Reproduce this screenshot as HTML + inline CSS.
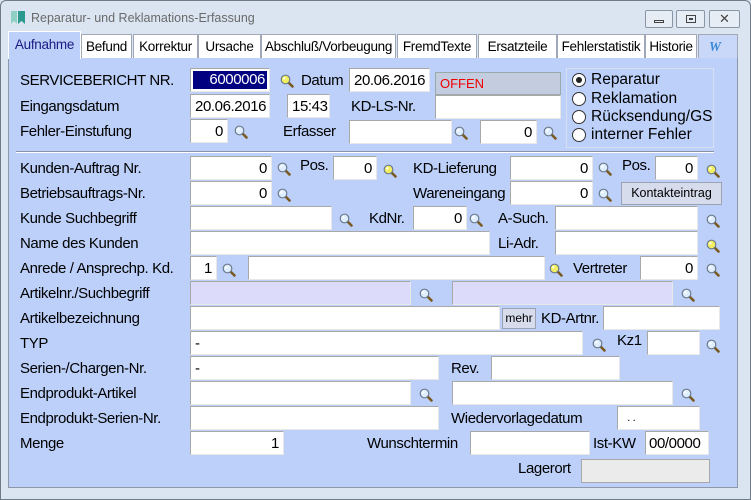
<!DOCTYPE html>
<html><head><meta charset="utf-8"><style>
*{margin:0;padding:0;box-sizing:border-box}
body{width:751px;height:500px;overflow:hidden;background:#dbe5f1;font-family:"Liberation Sans",Arial,sans-serif;position:relative}
.a{position:absolute}
.l{position:absolute;font-size:15px;color:#000;letter-spacing:-0.4px;white-space:nowrap;line-height:25px;height:24px}
.f{position:absolute;background:#fff;border:1px solid #a8a8a8;border-right-color:#e8e8e8;border-bottom-color:#e8e8e8;font-size:15px;line-height:23px;letter-spacing:-0.4px;padding:0 4px;height:24px;white-space:nowrap}
.r{text-align:right}
.lt{background:#dcdcfa}
.m{position:absolute;width:14px;height:14px}
.tab{position:absolute;top:34px;height:24px;background:#fff;border:1px solid #a0a8b8;border-bottom:none;font-size:13.5px;line-height:24px;text-align:center;color:#000;letter-spacing:-0.3px}
.rd{position:absolute;left:572px;width:14px;height:14px;border-radius:50%;border:1px solid #333;background:#fff}
.rt{position:absolute;left:591px;font-size:15.5px;line-height:18px}
</style></head><body>
<div class="a" style="left:0;top:0;width:751px;height:500px;border:1px solid #6f7b87;border-radius:6px 6px 0 0"></div>
<svg class="a" style="left:11px;top:11px" width="16" height="14"><rect x="0" y="0" width="6" height="13" fill="#8fd0c4"/><rect x="7" y="0" width="7" height="13" fill="#2b9a8e"/><path d="M0 13 L3 10 L6 13 M7 13 L10.5 10 L14 13" fill="#dbe5f1"/></svg>
<div class="a" style="left:31px;top:11px;font-size:12.5px;color:#6a6a6a">Reparatur- und Reklamations-Erfassung</div>
<div class="a" style="left:645px;top:10px;width:28px;height:18px;border:1px solid #8a96a4;border-radius:2px;background:#e6edf5"><div class="a" style="left:8px;top:9px;width:10px;height:3px;border:1px solid #444"></div></div>
<div class="a" style="left:676px;top:10px;width:29px;height:18px;border:1px solid #8a96a4;border-radius:2px;background:#e6edf5"><div class="a" style="left:9px;top:4px;width:10px;height:8px;border:1px solid #444"><div class="a" style="left:2px;top:2px;width:4px;height:2px;border:1px solid #444"></div></div></div>
<div class="a" style="left:709px;top:10px;width:31px;height:18px;border:1px solid #8a96a4;border-radius:2px;background:#e6edf5;font-size:13px;line-height:16px;text-align:center;color:#444">✕</div>

<div class="a" style="left:8px;top:57px;width:730px;height:431px;background:#bcd0fa;border:1px solid #8d98a8;border-top-color:#fff"></div>
<div class="tab" style="left:8px;top:31px;width:73px;height:28px;background:#bcd0fa;color:#1a1a80;line-height:26px;border-color:#fff">Aufnahme</div>
<div class="tab" style="left:81px;width:51px">Befund</div>
<div class="tab" style="left:133px;width:65px">Korrektur</div>
<div class="tab" style="left:198px;width:63px">Ursache</div>
<div class="tab" style="left:261px;width:135px">Abschluß/Vorbeugung</div>
<div class="tab" style="left:397px;width:80px">FremdTexte</div>
<div class="tab" style="left:478px;width:79px">Ersatzteile</div>
<div class="tab" style="left:557px;width:88px">Fehlerstatistik</div>
<div class="tab" style="left:645px;width:52px">Historie</div>
<div class="tab" style="left:698px;width:40px;background:#c9d8f8;color:#3a8ad8;font-style:italic;font-weight:bold;font-family:'Liberation Serif',serif;text-align:left;padding-left:10px">W</div>

<div class="a" style="left:566px;top:68px;width:148px;height:80px;border:1px solid #d8dff0"></div>
<div class="rd" style="top:73px"><div class="a" style="left:3px;top:3px;width:6px;height:6px;border-radius:50%;background:#222"></div></div><div class="rt" style="top:71px">Reparatur</div>
<div class="rd" style="top:92px"></div><div class="rt" style="top:90px">Reklamation</div>
<div class="rd" style="top:110px"></div><div class="rt" style="top:108px">Rücksendung/GS</div>
<div class="rd" style="top:128px"></div><div class="rt" style="top:126px">interner Fehler</div>
<div class="a" style="left:16px;top:151px;width:698px;height:2px;border-top:1px solid #8a94a8;border-bottom:1px solid #fff"></div>

<div id="c"></div>
<script>
var h='';
function L(x,y,t){h+='<div class="l" style="left:'+x+'px;top:'+y+'px">'+t+'</div>';}
function F(x,y,x2,t,c,s){h+='<div class="f '+(c||'')+'" style="left:'+x+'px;top:'+y+'px;width:'+(x2-x)+'px;'+(s||'')+'">'+(t||'')+'</div>';}
function M(x,y,yl){h+='<svg class="m" style="left:'+(x-6)+'px;top:'+(y-6)+'px" viewBox="0 0 14 14"><path d="M8 8 L12.5 12.5" stroke="#7a5a20" stroke-width="2.6" stroke-linecap="round"/><circle cx="5.5" cy="5.5" r="4.3" fill="'+(yl?'#f2f060':'#dfeeff')+'" stroke="#6c7a8c" stroke-width="1.2"/><circle cx="4.3" cy="4.3" r="1.3" fill="#fff" opacity=".8"/></svg>';}
L(20,68,'SERVICEBERICHT NR.');
h+='<div class="f r" style="left:190px;top:68px;width:80px;padding:2px"><div style="background:#000080;color:#fff;height:18px;line-height:18px;padding-right:2px">6000006</div></div>';
M(286,80,1);L(301,68,'Datum');F(349,68,430,'20.06.2016');
h+='<div class="a" style="left:435px;top:72px;width:126px;height:23px;background:#c4cce0;border:1px solid #9aa;font-size:13px;color:#e00;line-height:22px;padding-left:4px">OFFEN</div>';
L(20,94,'Eingangsdatum');F(190,94,270,'20.06.2016');F(287,94,330,'15:43');L(351,94,'KD-LS-Nr.');F(435,95,561,'');
L(20,119,'Fehler-Einstufung');F(190,119,228,'0','r');M(240,131);L(283,119,'Erfasser');F(349,120,452,'');M(460,132);F(480,120,537,'0','r');M(549,132);
L(20,156,'Kunden-Auftrag Nr.');F(190,156,272,'0','r');M(283,168);L(300,153,'Pos.');F(333,156,377,'0','r');M(389,170,1);L(413,156,'KD-Lieferung');F(510,156,593,'0','r');M(604,168);L(622,153,'Pos.');F(655,156,698,'0','r');M(712,170,1);
L(20,181,'Betriebsauftrags-Nr.');F(190,181,272,'0','r');M(283,194);L(413,181,'Wareneingang');F(510,181,593,'0','r');M(604,194);
h+='<div class="a" style="left:621px;top:182px;width:101px;height:23px;background:#d6dcec;border:1px solid #9aa2b4;font-size:12.5px;line-height:21px;text-align:center">Kontakteintrag</div>';
L(20,206,'Kunde Suchbegriff');F(190,206,332,'');M(345,219);L(369,206,'KdNr.');F(413,206,467,'0','r');M(475,219);L(498,206,'A-Such.');F(555,206,698,'');M(712,220);
L(20,231,'Name des Kunden');F(190,231,490,'');L(498,231,'Li-Adr.');F(555,231,698,'');M(712,245,1);
L(20,256,'Anrede / Ansprechp. Kd.');F(190,256,217,'1','r');M(228,269);F(248,256,545,'');M(555,269,1);L(573,256,'Vertreter');F(640,256,698,'0','r');M(712,269);
L(20,281,'Artikelnr./Suchbegriff');F(190,281,411,'','lt');M(425,294);F(452,281,673,'','lt');M(687,294);
L(20,306,'Artikelbezeichnung');F(190,306,500,'');
h+='<div class="a" style="left:502px;top:308px;width:34px;height:21px;background:#d6dcec;border:1px solid #9aa2b4;font-size:12px;line-height:19px;text-align:center">mehr</div>';
L(541,306,'KD-Artnr.');F(603,306,720,'');
L(20,331,'TYP');F(190,331,583,'-');M(598,344);L(617,328,'Kz1');F(647,331,700,'');M(712,345);
L(20,356,'Serien-/Chargen-Nr.');F(190,356,439,'-');L(451,356,'Rev.');F(491,356,620,'');
L(20,381,'Endprodukt-Artikel');F(190,381,411,'');M(425,394);F(452,381,673,'');M(687,394);
L(20,406,'Endprodukt-Serien-Nr.');F(190,406,439,'');L(451,406,'Wiedervorlagedatum');F(617,406,700,'&nbsp;&nbsp;.&nbsp;.','', 'font-size:11px');
L(20,431,'Menge');F(190,431,284,'1','r');L(367,431,'Wunschtermin');F(470,431,590,'');L(593,431,'Ist-KW');F(645,431,709,'00/0000','','padding:0 3px');
L(518,456,'Lagerort');h+='<div class="a" style="left:581px;top:459px;width:129px;height:24px;background:#ebebeb;border:1px solid #a8a8a8"></div>';
document.getElementById('c').innerHTML=h;
</script>
</body></html>
